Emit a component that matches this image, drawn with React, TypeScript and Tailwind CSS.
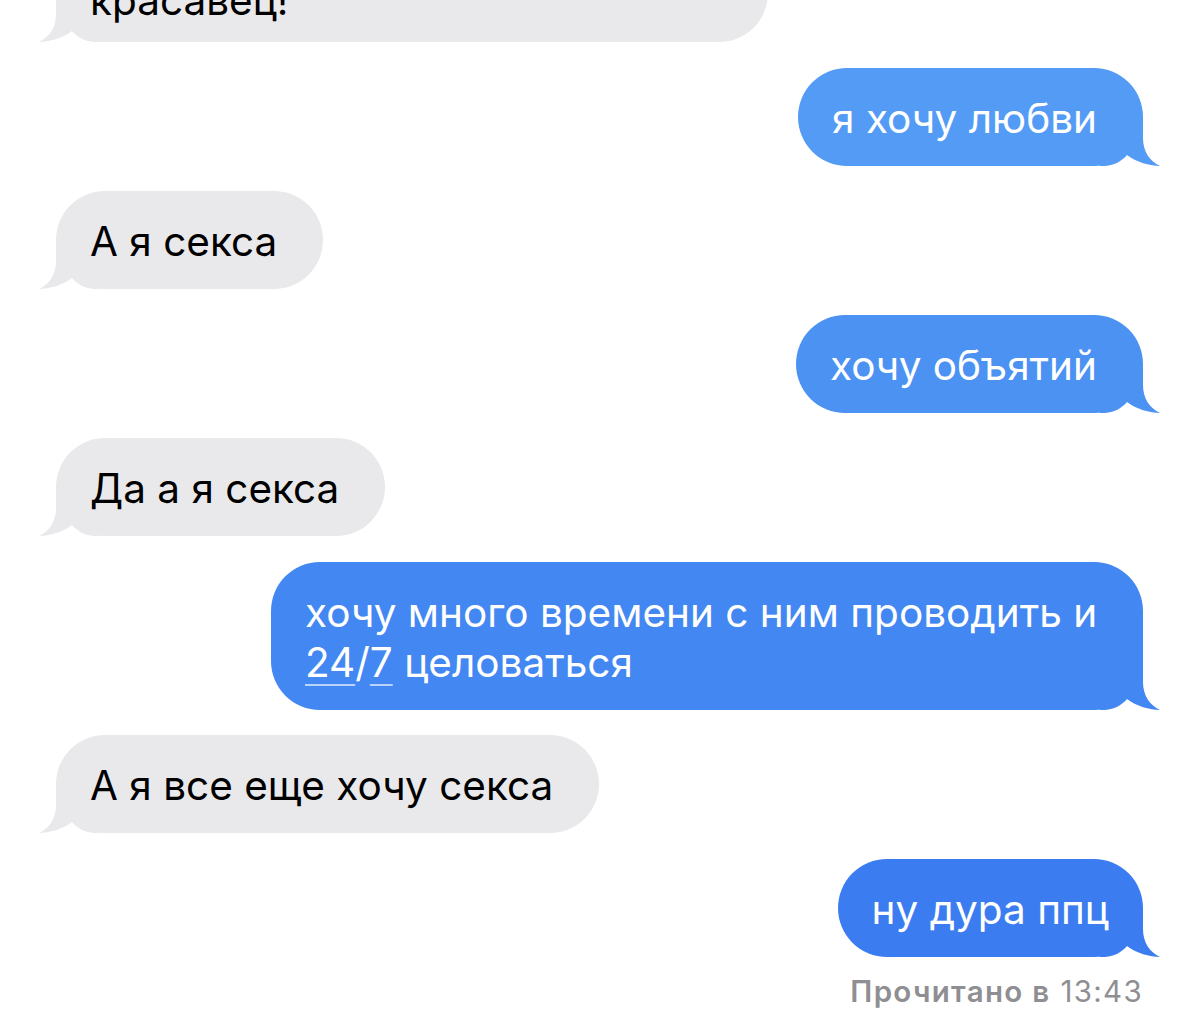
import type { ReactNode } from "react";

type Side = "in" | "out";

function Tail({ side, fill }: { side: Side; fill: string }) {
  const pos = side === "out" ? "right-[-17px]" : "left-[-17px] -scale-x-100";
  return (
    <svg
      viewBox="0 0 60 50"
      className={`absolute bottom-0 w-[60px] h-[50px] ${pos} ${fill}`}
    >
      <path d="M43 0 L43 22 C43 36 50 45 60 50 C50 50 36 46 27 39 C22 45 15 49 5 50 L0 50 L0 0 Z" />
    </svg>
  );
}

function Bubble({
  side,
  bg,
  fill,
  children,
  extra = "pt-[26px] pb-[22px] pr-[46px]",
}: {
  side: Side;
  bg: string;
  fill: string;
  children: ReactNode;
  extra?: string;
}) {
  const align = side === "out" ? "self-end text-white" : "self-start text-black";
  return (
    <div
      className={`relative ${align} ${bg} rounded-[49px] pl-[34px] text-[40.5px] leading-[50px] whitespace-nowrap ${extra}`}
    >
      <Tail side={side} fill={fill} />
      <span className="relative">{children}</span>
    </div>
  );
}

const gray = "bg-[#e9e9eb]";
const grayFill = "fill-[#e9e9eb]";
const link = "underline decoration-[#b9d3fb] decoration-2 underline-offset-[7px]";

export default function App() {
  return (
    <div className="w-[1200px] h-[1025px] overflow-hidden bg-white font-[Inter,'Liberation_Sans',sans-serif]">
      <div className="flex flex-col gap-[25.5px] pl-[56px] pr-[57px]">
        <Bubble side="in" bg={gray} fill={grayFill} extra="w-[712px] mt-[-56px] pt-[32px] pb-[16px]">
          красавец!
        </Bubble>
        <Bubble side="out" bg="bg-[#539bf5]" fill="fill-[#539bf5]">
          я хочу любви
        </Bubble>
        <Bubble side="in" bg={gray} fill={grayFill}>
          А я секса
        </Bubble>
        <Bubble side="out" bg="bg-[#4b92f3]" fill="fill-[#4b92f3]">
          хочу объятий
        </Bubble>
        <Bubble side="in" bg={gray} fill={grayFill}>
          Да а я секса
        </Bubble>
        <Bubble side="out" bg="bg-[#4387f2]" fill="fill-[#4387f2]" extra="w-[872px] pt-[26px] pb-[22px]">
          хочу много времени с ним проводить и
          <br />
          <span className={link}>24</span>/<span className={link}>7</span> целоваться
        </Bubble>
        <Bubble side="in" bg={gray} fill={grayFill}>
          А я все еще хочу секса
        </Bubble>
        <Bubble side="out" bg="bg-[#3b7df0]" fill="fill-[#3b7df0]" extra="pt-[26px] pb-[22px] pr-[34px]">
          ну дура ппц
        </Bubble>
      </div>
      <div className="flex justify-end pr-[57px] mt-[17px] text-[29.5px] leading-[34px] tracking-[1.3px] text-[#8e8e93]">
        <span className="font-semibold">Прочитано в</span>
        <span className="ml-[10px]">13:43</span>
      </div>
    </div>
  );
}
